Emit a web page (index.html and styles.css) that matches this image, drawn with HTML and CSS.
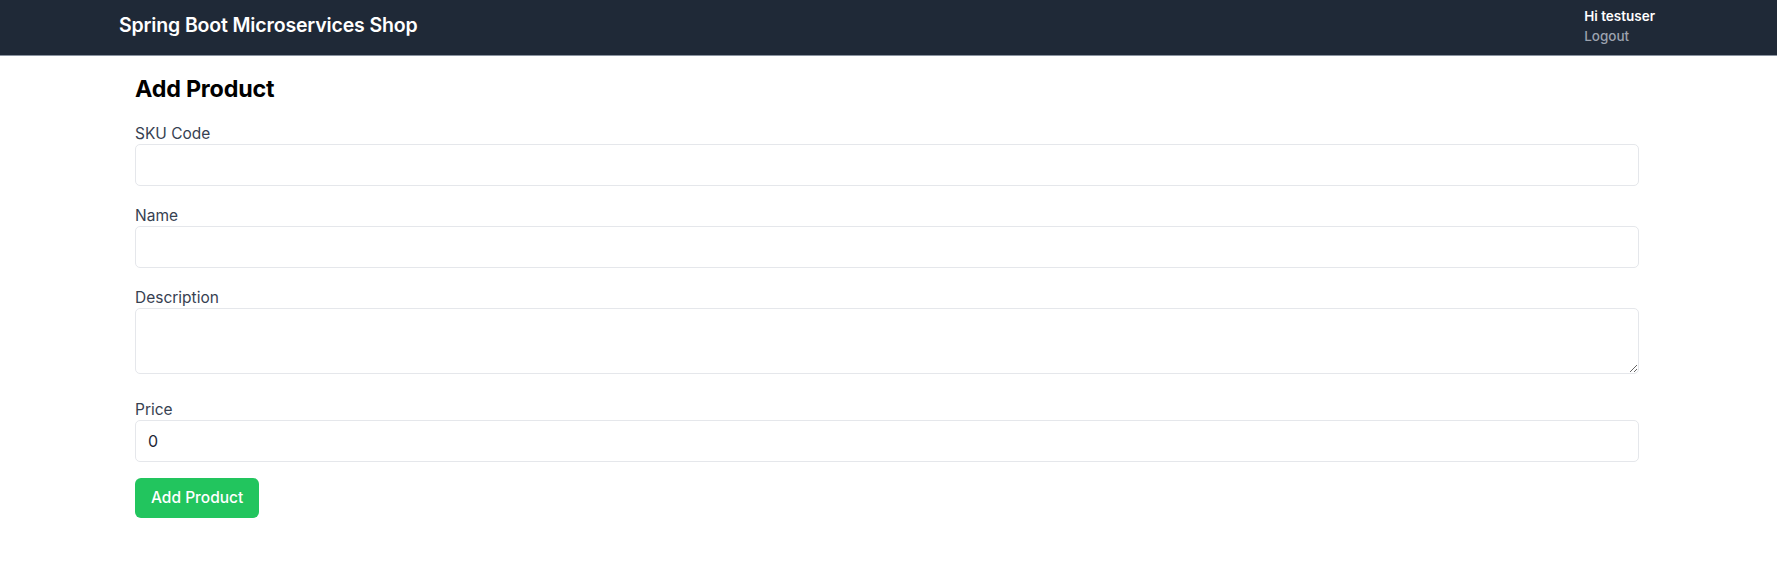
FILE: index.html
```html
<!DOCTYPE html>
<html lang="en">
<head>
<meta charset="utf-8">
<title>Spring Boot Microservices Shop</title>
<link rel="stylesheet" href="styles.css">
</head>
<body>
<header class="topbar">
  <div class="topbar-inner">
    <a class="brand" href="#">Spring Boot Microservices Shop</a>
    <div class="user">
      <div class="user-name">Hi testuser</div>
      <a class="logout" href="#">Logout</a>
    </div>
  </div>
</header>
<main class="page">
  <h1 class="page-title">Add Product</h1>
  <form class="product-form">
    <div class="field">
      <label class="field-label" for="sku">SKU Code</label>
      <input class="field-input" id="sku" type="text">
    </div>
    <div class="field">
      <label class="field-label" for="name">Name</label>
      <input class="field-input" id="name" type="text">
    </div>
    <div class="field">
      <label class="field-label" for="desc">Description</label>
      <textarea class="field-input field-textarea" id="desc" rows="2"></textarea>
    </div>
    <div class="field">
      <label class="field-label" for="price">Price</label>
      <input class="field-input" id="price" type="text" value="0">
    </div>
    <button class="btn-submit" type="button">Add Product</button>
  </form>
</main>
</body>
</html>
```

FILE: styles.css
```css
* {
  box-sizing: border-box;
}

html, body {
  margin: 0;
  padding: 0;
  background: #ffffff;
}

body {
  font-family: Inter, "Noto Sans", "Liberation Sans", sans-serif;
  color: #111827;
  font-size: 16px;
  line-height: 24px;
}

.topbar {
  background: #1f2937;
  border-bottom: 1px solid #8a93a0;
  padding-right: 3px;
}

.topbar-inner {
  max-width: 1536px;
  margin: 0 auto;
  height: 55px;
  display: flex;
  align-items: flex-start;
  justify-content: space-between;
}

.brand {
  margin-top: 11px;
  color: #ffffff;
  text-decoration: none;
  font-size: 19.5px;
  line-height: 28px;
  font-weight: 600;
  letter-spacing: -0.15px;
}

.user {
  margin-top: 6px;
  display: flex;
  flex-direction: column;
  font-size: 13.5px;
  line-height: 20px;
}

.user-name {
  color: #ffffff;
  font-weight: 600;
}

.logout {
  color: #9ca3af;
  text-decoration: none;
  font-weight: 500;
}

.page {
  max-width: 1539px;
  margin: 0 auto;
  padding: 17px 19px 16px 16px;
}

.page-title {
  margin: 0 0 15px;
  font-size: 23.3px;
  line-height: 32px;
  font-weight: 700;
  color: #000000;
  letter-spacing: -0.2px;
}

.field {
  margin-bottom: 16px;
}

.field-label {
  display: block;
  color: #374151;
  font-size: 15.5px;
  line-height: 24px;
  padding-top: 2px;
  margin-bottom: -2px;
}

.field-input {
  display: block;
  width: 100%;
  height: 42px;
  padding: 8px 12px;
  border: 1px solid #e5e7eb;
  border-radius: 5px;
  font-family: inherit;
  font-size: 16px;
  line-height: 24px;
  color: #1f2937;
  background: #ffffff;
}

.field-textarea {
  display: inline-block;
  height: 66px;
  resize: vertical;
  vertical-align: baseline;
}

.btn-submit {
  display: inline-block;
  background: #22c55e;
  color: #ffffff;
  border: none;
  border-radius: 6px;
  padding: 8px 16px;
  height: 40px;
  font-family: inherit;
  font-size: 15.5px;
  line-height: 24px;
  font-weight: 500;
}
```
